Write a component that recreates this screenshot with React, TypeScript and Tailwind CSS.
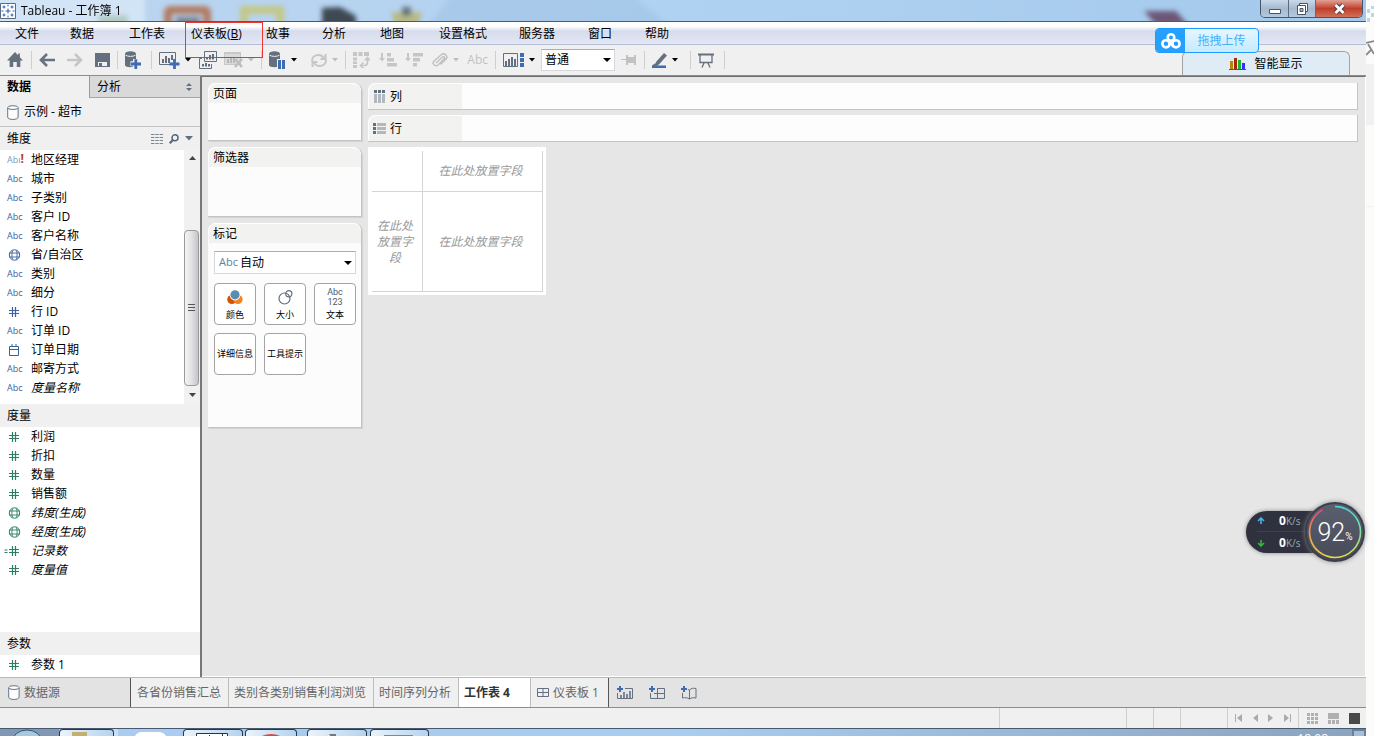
import React from "react";

const Caret = ({ className = "fill-black" }: { className?: string }) => (
  <svg width="6" height="4" viewBox="0 0 6 4" className={className}>
    <path d="M0 0h6L3 3.5z" />
  </svg>
);

/* ---------- menu ---------- */

const menus: { label: string; key?: string; width: string }[] = [
  { label: "文件", width: "w-[55px]" },
  { label: "数据", width: "w-[59px]" },
  { label: "工作表", width: "w-[62px]" },
  { label: "仪表板", key: "B", width: "w-[75px]" },
  { label: "故事", width: "w-[56px]" },
  { label: "分析", width: "w-[58px]" },
  { label: "地图", width: "w-[59px]" },
  { label: "设置格式", width: "w-[80px]" },
  { label: "服务器", width: "w-[69px]" },
  { label: "窗口", width: "w-[57px]" },
  { label: "帮助", width: "w-[57px]" },
];

/* ---------- toolbar icons ---------- */

const HomeIcon = () => (
  <svg width="16" height="16" viewBox="0 0 18 16" preserveAspectRatio="none" fill="#64707f">
    <path d="M9 0l3.5 3.3V1.5h2v3.7L18 8.5h-3V15h-4v-5H7v5H3V8.5H0z" />
  </svg>
);
const ArrowLeft = () => (
  <svg width="16" height="14" viewBox="0 0 16 14" fill="none" stroke="#66727f" strokeWidth="2.6">
    <path d="M16 7H2M8 1L2 7l6 6" />
  </svg>
);
const ArrowRight = () => (
  <svg width="16" height="14" viewBox="0 0 16 14" fill="none" stroke="#c6c6c6" strokeWidth="2.6">
    <path d="M0 7h14M8 1l6 6-6 6" />
  </svg>
);
const SaveIcon = () => (
  <svg width="15" height="14" viewBox="0 0 15 14">
    <path fill="#64707f" d="M0 0h15v14H0z" />
    <path fill="#efefef" d="M3 9h9v4H3z" />
    <path fill="#64707f" d="M4 10h3v3H4z" />
  </svg>
);
const Cylinder = () => (
  <g>
    <path fill="#64707f" d="M0 3v11c0 1.3 2.5 2.3 5.500 2.300S11 15.300 11 14V3z" />
    <ellipse cx="5.500" cy="2.800" rx="5.500" ry="2.600" fill="#64707f" />
    <path d="M.6 4.200c2 1.600 8 1.600 9.800 0" fill="none" stroke="#efefef" strokeWidth="1" />
  </g>
);
const AddDataIcon = () => (
  <svg width="16" height="18" viewBox="0 0 16 18">
    <Cylinder />
    <path d="M10.500 8v9.500M5.500 12.700h10" stroke="#efefef" strokeWidth="5" />
    <path d="M10.800 8.200V18M6 13h10" stroke="#3f6cb0" strokeWidth="2.800" />
  </svg>
);
const AddSheetIcon = () => (
  <svg width="21" height="18" viewBox="0 0 21 18">
    <path d="M11 13.500H.5v-12h16V8" fill="none" stroke="#64707f" />
    <path fill="#64707f" d="M3 8h2v4H3zM6 5h2v7H6zM9 7h2v5H9zM12 4h2v5h-2z" />
    <path d="M15.500 8v10M10.500 13h10" stroke="#3f6cb0" strokeWidth="2.800" />
  </svg>
);
const DuplicateIcon = () => (
  <svg width="18" height="18" viewBox="0 0 18 18" fill="none" stroke="#64707f">
    <path d="M5.500.5h12v10h-12z" />
    <path d="M3 7.500H.5v10h12V13" />
    <path strokeWidth="2" d="M8 8.500V6M11 8.500V4M14 8.500V3M4 15.500V13M7 15.500V12M10 15.500V13" />
  </svg>
);
const ClearSheetIcon = () => (
  <svg width="19" height="16" viewBox="0 0 19 16">
    <path fill="#c8c8c8" d="M0 0h17v13H0z" />
    <path fill="#efefef" d="M1 2h15v10H1z" opacity=".45" />
    <path fill="#b8b8b8" d="M3 7h2v4H3zM6 5h2v6H6zM9 6h2v5H9z" />
    <path d="M11 7l7 8M18 7l-7 8" stroke="#bdbdbd" strokeWidth="2.600" />
  </svg>
);
const PauseDataIcon = () => (
  <svg width="17" height="18" viewBox="0 0 17 18">
    <Cylinder />
    <path fill="#efefef" d="M8 8h9v10H8z" />
    <path fill="#3f6cb0" d="M9 9h3v9H9zM13 9h3v9h-3z" />
  </svg>
);
const RefreshIcon = () => (
  <svg width="16" height="15" viewBox="0 0 16 15" fill="none" stroke="#c6c6c6" strokeWidth="2">
    <path d="M1 8c0-4 3-6 6.500-6 2.500 0 4 1 5.500 3M15 7c0 4-3 6-6.500 6C6 13 4.500 12 3 10" />
    <path d="M14.500 1v5h-5M1.500 14V9h5" />
  </svg>
);
const SwapIcon = () => (
  <svg width="17" height="16" viewBox="0 0 17 16">
    <path fill="#c6c6c6" d="M0 0h4v4H0zM5.500 0h4v4h-4zM11 0h5v4h-5zM0 5.500h4v3H0zM0 9.500h4v2.500H0zM0 13h4v3H0z" />
    <path d="M14.500 6v4c0 2-1 3.500-3 3.500H8M10.500 10.500l-3 3 3 3M12 8.500l2.500-3 2.500 3" fill="none" stroke="#c6c6c6" strokeWidth="1.700" />
  </svg>
);
const SortAscIcon = () => (
  <svg width="18" height="14" viewBox="0 0 18 14" fill="#c6c6c6">
    <path d="M2 0h2v5h2L3 8.500 0 5h2zM8 0h4v3.500H8zM8 5h7v3.500H8zM8 10h10v3.500H8z" />
  </svg>
);
const SortDescIcon = () => (
  <svg width="18" height="14" viewBox="0 0 18 14" fill="#c6c6c6">
    <path d="M2 0h2v5h2L3 8.500 0 5h2zM8 0h10v3.500H8zM8 5h7v3.500H8zM8 10h4v3.500H8z" />
  </svg>
);
const ClipIcon = () => (
  <svg width="16" height="15" viewBox="0 0 16 15" fill="none" stroke="#c2c2c2" strokeWidth="1.500" strokeLinecap="round">
    <path d="M4.500 9.500l6-5.500c1.300-1 3 .6 1.800 1.900L6 12c-2.300 2-6.400-.7-4.200-3.800L9.500 1.500c2.500-2 6.500.8 5 4L9 11" />
  </svg>
);
const ShowMeIcon = () => (
  <svg width="21" height="15" viewBox="0 0 21 15">
    <path d="M.5.5h14v13H.5z" fill="none" stroke="#64707f" />
    <path fill="#64707f" d="M2 8h2v5H2zM5 6h2v7H5zM8 4h2v9H8zM11 6h2v7h-2z" />
    <path fill="#3f6cb0" d="M17 0h4v4h-4zM17 5h4v4h-4zM17 10h4v4h-4z" />
  </svg>
);
const PinIcon = () => (
  <svg width="16" height="10" viewBox="0 0 16 10" fill="#c2c2c2">
    <path d="M0 4h5V0h2v2h6V0h2v10h-2V8H7v2H5V5H0z" />
  </svg>
);
const PenIcon = () => (
  <svg width="15" height="15" viewBox="0 0 15 15">
    <path fill="#64707f" d="M12 0l3 2.500-8 9L2 14l2-5z" />
    <path fill="#3f6cb0" d="M0 12.500h14V15H0z" />
    <path fill="#64707f" d="M0 12.500l3-2 3 1.500-3 2.500z" />
  </svg>
);
const PresentIcon = () => (
  <svg width="16" height="15" viewBox="0 0 16 15" fill="none" stroke="#64707f" strokeWidth="1.300">
    <path d="M0 1.500h16" strokeWidth="2" />
    <path d="M2 2v7.500h12V2M6 10l-2 4.500M10 10l2 4.500" />
  </svg>
);

const Tool = ({
  label,
  children,
  caret,
}: {
  label: string;
  children: React.ReactNode;
  caret?: "on" | "off";
}) => (
  <button aria-label={label} className="flex shrink-0 items-center gap-[5px]">
    {children}
    {caret && <Caret className={caret === "on" ? "fill-black" : "fill-[#bdbdbd]"} />}
  </button>
);

const Group = ({ width, children }: { width: string; children: React.ReactNode }) => (
  <div className={`flex h-[18px] shrink-0 items-center justify-between border-r border-[#cfcfcf] px-[7px] ${width}`}>
    {children}
  </div>
);

/* ---------- field icons ---------- */

type Kind = "abc" | "abc!" | "globe" | "hash" | "date" | "calc";

const FieldIcon = ({ kind, tone }: { kind: Kind; tone: "blue" | "green" }) => {
  const color = tone === "blue" ? "#3b62a0" : "#2a7f60";
  if (kind === "abc")
    return <span className="font-['Open_Sans',sans-serif] text-[9px] font-medium text-[#3b62a0]">Abc</span>;
  if (kind === "abc!")
    return (
      <span className="font-['Open_Sans',sans-serif] text-[9px] text-[#7d97c4]">
        Abı
        <b className="text-[12px] text-[#b8432f]">!</b>
      </span>
    );
  if (kind === "globe")
    return (
      <svg width="15" height="12" viewBox="-1 0 15 12" fill="none" stroke={color}>
        <circle cx="6.500" cy="6" r="5.200" />
        <path d="M1.300 4h10.400M1.300 8h10.400M4.500 1.500c-.8 3-.8 6 0 9M8.500 1.500c.8 3 .8 6 0 9" strokeWidth=".9" />
      </svg>
    );
  if (kind === "date")
    return (
      <svg width="14" height="12" viewBox="-2 0 14 12" fill="none" stroke={color}>
        <path d="M.5 2.500h9v9h-9zM.5 5.500h9M3 0v3M7 0v3" />
      </svg>
    );
  return (
    <svg width="16" height="10" viewBox="-6 0 16 10" className="-ml-1" fill="none" stroke={color} strokeWidth="1.200">
      <path d="M3.500 0v10M6.500 0v10M0 3.500h10M0 6.500h10" />
      {kind === "calc" && <path d="M-4.500 4h3M-4.500 6.500h3" />}
    </svg>
  );
};

const Field = ({ kind, label, italic, tone }: { kind: Kind; label: string; italic?: boolean; tone: "blue" | "green" }) => (
  <li className="flex h-[19px] items-center pl-[7px]">
    <span className="flex w-6 shrink-0 items-center whitespace-nowrap">
      <FieldIcon kind={kind} tone={tone} />
    </span>
    <span className={italic ? "italic" : ""}>{label}</span>
  </li>
);

const dimensions: { kind: Kind; label: string; italic?: boolean }[] = [
  { kind: "abc!", label: "地区经理" },
  { kind: "abc", label: "城市" },
  { kind: "abc", label: "子类别" },
  { kind: "abc", label: "客户 ID" },
  { kind: "abc", label: "客户名称" },
  { kind: "globe", label: "省/自治区" },
  { kind: "abc", label: "类别" },
  { kind: "abc", label: "细分" },
  { kind: "hash", label: "行 ID" },
  { kind: "abc", label: "订单 ID" },
  { kind: "date", label: "订单日期" },
  { kind: "abc", label: "邮寄方式" },
  { kind: "abc", label: "度量名称", italic: true },
];

const measures: { kind: Kind; label: string; italic?: boolean }[] = [
  { kind: "hash", label: "利润" },
  { kind: "hash", label: "折扣" },
  { kind: "hash", label: "数量" },
  { kind: "hash", label: "销售额" },
  { kind: "globe", label: "纬度(生成)", italic: true },
  { kind: "globe", label: "经度(生成)", italic: true },
  { kind: "calc", label: "记录数", italic: true },
  { kind: "hash", label: "度量值", italic: true },
];

const DatabaseIcon = () => (
  <svg width="12" height="15" viewBox="0 0 12 15" fill="#fdfdfd" stroke="#64758a">
    <path d="M.7 2.800v9.400c0 3 10.400 3 10.400 0V2.800" />
    <ellipse cx="5.900" cy="2.600" rx="5.200" ry="1.900" />
  </svg>
);

const SectionHeader = ({ children }: { children: React.ReactNode }) => (
  <div className="flex h-[23px] shrink-0 items-center justify-between bg-[#f0f0f0] pr-[7px] pl-[7px]">{children}</div>
);

/* ---------- title bar ---------- */

const TitleBar = () => (
  <header className="relative flex h-[22px] shrink-0 items-center overflow-hidden border-b border-[#4d5b6b] bg-gradient-to-r from-[#bdd5ef] via-[#b0d2f2] to-[#a4c9eb]">
    <svg className="absolute inset-y-0 left-0 h-[21px] w-[1300px]" viewBox="0 0 1300 21" preserveAspectRatio="xMinYMin">
      <defs>
        <filter id="glass" filterUnits="userSpaceOnUse" x="-20" y="-20" width="1340" height="70">
          <feGaussianBlur stdDeviation="2.500" />
        </filter>
      </defs>
      <g filter="url(#glass)">
        <path fill="#dcebf9" d="M-10-10h155v40H-10z" opacity=".7" />
        <path fill="#8fb3d8" d="M455-10h170l50 40H425z" opacity=".3" />
        <path d="M168 30V13q0-3 3-3h33q3 0 3 3v17" fill="none" stroke="#b07a62" strokeWidth="8" />
        <path fill="#74838f" d="M176 17h24v10h-24z" />
        <path d="M244 30V10h36v20" fill="none" stroke="#c3c886" strokeWidth="8" />
        <path fill="#3d4a52" d="M322 8l18-1 16 9v12h-34z" />
        <path fill="#b7ba85" d="M392 12h30l-4 14h-24z" />
        <path fill="#66717a" d="M402 7h9v9h-9z" />
        <path fill="#93b18e" d="M98 15h30v10H98z" opacity=".5" />
        <path fill="#6c5674" d="M1144 11h32l12 14h-32z" />
      </g>
    </svg>
    <h1 className="relative flex items-center gap-[5px] text-[12px] text-black">
      <svg width="16" height="16" viewBox="0 0 16 16" stroke="#2d5fa8">
        <path fill="#fff" stroke="#5b6b80" d="M.5.5h15v15H.5z" />
        <path d="M8 5.500v5M5.500 8h5M4 2.500v3M2.500 4h3M12 2.500v3M10.500 4h3M4 10.500v3M2.500 12h3M12 10.500v3M10.500 12h3M8 1.500v2M8 12.500v2M1.500 8h2M12.500 8h2" />
      </svg>
      Tableau - 工作簿 1
    </h1>
    <div className="absolute top-0 right-[3px] flex h-[18px] overflow-hidden rounded-b-[5px] border border-t-0 border-[#44566b]">
      <button aria-label="最小化" className="flex w-7 items-center justify-center border-r border-[#5c6c80] bg-gradient-to-b from-[#c9d9ea] via-[#a6b9ce] to-[#b4cadf]">
        <svg width="12" height="16" viewBox="0 0 12 16">
          <path fill="#fff" stroke="#4a5564" d="M.5 8.500h11v4H.5z" />
        </svg>
      </button>
      <button aria-label="还原" className="flex w-[27px] items-center justify-center border-r border-[#5c6c80] bg-gradient-to-b from-[#c9d9ea] via-[#a6b9ce] to-[#b4cadf]">
        <svg width="13" height="14" viewBox="0 0 13 14" fill="#fff" stroke="#4a5564">
          <path d="M3.500 1.500h8v8h-8z" />
          <path d="M1.500 3.500h8v9h-8z" />
          <path fill="#a6b9ce" d="M4 6.500h3v3H4z" />
        </svg>
      </button>
      <button aria-label="关闭" className="flex w-[46px] items-center justify-center bg-gradient-to-b from-[#e0a094] via-[#bf3d29] to-[#d0705a]">
        <svg width="13" height="12" viewBox="0 0 13 12" fill="none">
          <path d="M2.500 2l8 8M10.500 2l-8 8" stroke="#564049" strokeWidth="5" />
          <path d="M2.500 2l8 8M10.500 2l-8 8" stroke="#fff" strokeWidth="2.800" />
        </svg>
      </button>
    </div>
  </header>
);

const MenuBar = () => (
  <nav className="flex h-[23px] shrink-0 items-stretch border-b border-[#b4bdd3] bg-gradient-to-b from-white from-[20%] via-[#d6dcec] via-[42%] to-[#e3e8f5] pt-[2px] pl-[15px]">
    {menus.map((m) => (
      <button key={m.label} className={`shrink-0 text-left whitespace-nowrap ${m.width}`}>
        {m.label}
        {m.key && (
          <>
            (<u>{m.key}</u>)
          </>
        )}
      </button>
    ))}
  </nav>
);

const Toolbar = () => (
  <div className="flex h-[31px] shrink-0 items-center border-b border-[#8d8d8d] bg-[#f0f0f0]">
    <Group width="w-8">
      <Tool label="起始页"><HomeIcon /></Tool>
    </Group>
    <Group width="w-[86px]">
      <Tool label="撤消"><ArrowLeft /></Tool>
      <Tool label="重做"><ArrowRight /></Tool>
      <Tool label="保存"><SaveIcon /></Tool>
    </Group>
    <Group width="w-[34px]">
      <Tool label="新建数据源"><AddDataIcon /></Tool>
    </Group>
    <Group width="w-[110px]">
      <Tool label="新建工作表" caret="on"><AddSheetIcon /></Tool>
      <Tool label="复制工作表"><DuplicateIcon /></Tool>
      <Tool label="清除工作表" caret="off"><ClearSheetIcon /></Tool>
    </Group>
    <Group width="w-[84px]">
      <Tool label="暂停更新" caret="on"><PauseDataIcon /></Tool>
      <Tool label="运行更新" caret="off"><RefreshIcon /></Tool>
    </Group>
    <Group width="w-[150px]">
      <Tool label="交换行和列"><SwapIcon /></Tool>
      <Tool label="升序排序"><SortAscIcon /></Tool>
      <Tool label="降序排序"><SortDescIcon /></Tool>
      <Tool label="组成员" caret="off"><ClipIcon /></Tool>
      <Tool label="显示标记标签">
        <span className="font-['Open_Sans',sans-serif] text-[12px] font-medium text-[#c2c2c2]">Abc</span>
      </Tool>
    </Group>
    <Group width="w-[149px]">
      <Tool label="显示卡" caret="on"><ShowMeIcon /></Tool>
      <div className="relative">
        <select aria-label="适合" className="h-[22px] w-[74px] appearance-none border border-[#d5d8de] border-t-[#a9adb5] bg-white pl-[3px] text-black">
          <option>普通</option>
        </select>
        <svg width="8" height="4" viewBox="0 0 8 4" className="pointer-events-none absolute top-[9px] right-1">
          <path d="M0 0h8L4 4z" />
        </svg>
      </div>
      <Tool label="固定轴"><PinIcon /></Tool>
    </Group>
    <Group width="w-[46px]">
      <Tool label="突出显示" caret="on"><PenIcon /></Tool>
    </Group>
    <Group width="w-[34px]">
      <Tool label="演示模式"><PresentIcon /></Tool>
    </Group>
    <button className="mr-4 ml-auto flex h-6 w-[168px] items-center justify-center gap-2 self-end rounded-t-md border border-b-0 border-[#a0a4a8] bg-[#dfebf5] text-black">
      <svg width="17" height="13" viewBox="0 0 17 13">
        <path fill="#b8860b" d="M1 4h3v8H1z" />
        <path fill="#a02c10" d="M5 1h3v11H5z" />
        <path fill="#1fb32e" d="M9 3h3v9H9z" />
        <path fill="#2a32ff" d="M13 6h3v6h-3z" />
        <path fill="#555" d="M0 12h17v1H0z" />
      </svg>
      智能显示
    </button>
  </div>
);

/* ---------- data pane ---------- */

const DataPane = () => (
  <aside className="flex w-[202px] shrink-0 flex-col border-r-2 border-[#777] bg-white">
    <div className="flex h-[22px] shrink-0" role="tablist">
      <button role="tab" aria-selected="true" className="w-[90px] border-r border-[#9a9a9a] bg-[#f0f0f0] pl-[7px] text-left font-bold">
        数据
      </button>
      <button role="tab" aria-selected="false" className="flex flex-1 items-center justify-between border-b border-[#a6a6a6] bg-[#d9d9d9] pr-2 pl-[7px]">
        分析
        <svg width="6" height="8" viewBox="0 0 6 8" fill="#64707f">
          <path d="M3 0l3 3H0zM3 8L0 5h6z" />
        </svg>
      </button>
    </div>
    <button className="flex h-[29px] shrink-0 items-center gap-[5px] border-b border-[#c4c4c4] bg-[#f0f0f0] pl-[7px]">
      <DatabaseIcon />
      示例 - 超市
    </button>
    <SectionHeader>
      <h2>维度</h2>
      <span className="flex items-center gap-[6px]">
        <button aria-label="查看数据">
          <svg width="12" height="10" viewBox="0 0 12 10" stroke="#7b8591" strokeDasharray="3.400 .9">
            <path d="M0 .5h12M0 3.500h12M0 6.500h12M0 9.500h12" />
          </svg>
        </button>
        <button aria-label="查找字段">
          <svg width="10" height="10" viewBox="0 0 10 10" fill="none" stroke="#56657a">
            <circle cx="6" cy="3.800" r="3" strokeWidth="1.500" />
            <path d="M4 6L.7 9.300" strokeWidth="2" />
          </svg>
        </button>
        <button aria-label="菜单">
          <svg width="8" height="5" viewBox="0 0 8 5" fill="#64707f">
            <path d="M0 0h8L4 4.500z" />
          </svg>
        </button>
      </span>
    </SectionHeader>
    <div className="flex h-[254px] shrink-0">
      <ul className="flex-1">
        {dimensions.map((f) => (
          <Field key={f.label} tone="blue" {...f} />
        ))}
      </ul>
      <div className="flex w-4 flex-col items-center bg-[#f1f1f1]">
        <button aria-label="向上滚动" className="flex h-4 shrink-0 items-center">
          <svg width="7" height="4" viewBox="0 0 7 4" fill="#444">
            <path d="M3.500 0L7 4H0z" />
          </svg>
        </button>
        <div className="h-16 shrink-0" />
        <div className="mr-px flex w-[15px] flex-1 items-center justify-center rounded-sm border border-[#9a9a9a] bg-gradient-to-r from-[#f4f4f4] via-[#e2e2e4] to-[#c4c5ca]">
          <svg width="8" height="8" viewBox="0 0 8 8" stroke="#555">
            <path d="M0 .5h7M0 3.500h7M0 6.500h7" />
          </svg>
        </div>
        <button aria-label="向下滚动" className="flex h-[18px] shrink-0 items-center">
          <svg width="7" height="4" viewBox="0 0 7 4" fill="#444">
            <path d="M0 0h7L3.500 4z" />
          </svg>
        </button>
      </div>
    </div>
    <SectionHeader>
      <h2>度量</h2>
    </SectionHeader>
    <ul className="min-h-0 flex-1 overflow-hidden">
      {measures.map((f) => (
        <Field key={f.label} tone="green" {...f} />
      ))}
    </ul>
    <SectionHeader>
      <h2>参数</h2>
    </SectionHeader>
    <ul className="h-[22px] shrink-0">
      <Field kind="hash" label="参数 1" tone="green" />
    </ul>
  </aside>
);

/* ---------- cards ---------- */

const Card = ({ title, height, children }: { title: string; height: string; children?: React.ReactNode }) => (
  <section className={`w-[154px] rounded-t-lg border-r border-b border-[#c4c4c4] bg-[#fcfcfc] shadow-[1px_1px_1px_#d2d2d2] ${height}`}>
    <h2 className="flex h-5 items-center rounded-t-lg border-t border-l border-white bg-[#f2f2f0] pl-1">{title}</h2>
    {children}
  </section>
);

const MarkButton = ({ label, icon }: { label: string; icon?: React.ReactNode }) => (
  <button className="flex h-[42px] w-[42px] flex-col items-center justify-center rounded-[4px] border border-[#a3a3a3] bg-white text-[9px] leading-[14px] whitespace-nowrap">
    {icon && <span className="flex h-[22px] items-center">{icon}</span>}
    {label}
  </button>
);

const MarksCard = () => (
  <Card title="标记" height="h-[205px]">
    <div className="relative mt-2 mr-[5px] ml-[6px]">
      <span className="pointer-events-none absolute top-[3px] left-[5px] font-['Open_Sans',sans-serif] text-[11px] font-medium text-[#5583a5]">Abc</span>
      <select aria-label="标记类型" className="h-[23px] w-full appearance-none border border-[#d3d8de] border-t-[#a9adb5] bg-white pl-[25px] text-black">
        <option>自动</option>
      </select>
      <svg width="8" height="4" viewBox="0 0 8 4" className="pointer-events-none absolute top-[10px] right-1">
        <path d="M0 0h8L4 4z" />
      </svg>
    </div>
    <div className="mt-[9px] mr-[5px] ml-[6px] grid grid-cols-[repeat(3,42px)] gap-2">
      <MarkButton
        label="颜色"
        icon={
          <svg width="16" height="15" viewBox="0 0 16 15">
            <circle cx="4.800" cy="9.500" r="4.600" fill="#d35400" />
            <circle cx="11" cy="9.500" r="4.600" fill="#f58220" />
            <circle cx="8" cy="5" r="5.400" fill="#fff" />
            <circle cx="8" cy="4.800" r="4.600" fill="#5b8db1" />
          </svg>
        }
      />
      <MarkButton
        label="大小"
        icon={
          <svg width="15" height="15" viewBox="0 0 15 15" fill="none" stroke="#64707f" strokeWidth="1.200">
            <circle cx="6.500" cy="8.500" r="5.500" />
            <circle cx="10.800" cy="3.800" r="3.100" />
          </svg>
        }
      />
      <MarkButton
        label="文本"
        icon={
          <span className="flex flex-col font-['Roboto',sans-serif] text-[9px] leading-[10px] text-[#4e5c6e]">
            <span>Abc</span>
            <span>123</span>
          </span>
        }
      />
      <MarkButton label="详细信息" />
      <MarkButton label="工具提示" />
    </div>
  </Card>
);

const Shelf = ({ label, icon }: { label: string; icon: React.ReactNode }) => (
  <div className="flex h-[27px] rounded-tl-lg border-r border-b border-[#c4c4c4] bg-[#fdfdfd]">
    <h2 className="flex w-[94px] items-center gap-1 rounded-tl-lg border-t border-l border-white bg-[#f2f2f0] pl-1">
      {icon}
      {label}
    </h2>
  </div>
);

const dropCell = "flex items-center justify-center border-r border-b border-[#d4d4d4] pr-1";

const Workspace = () => (
  <main className="flex min-w-0 flex-1 gap-[6px] border-t border-r border-b border-t-[#6e6e6e] border-r-white border-b-white bg-[#e6e6e6] pt-[6px] pr-[7px] pl-[6px]">
    <div className="flex shrink-0 flex-col gap-[6px]">
      <Card title="页面" height="h-[58px]" />
      <Card title="筛选器" height="h-[70px]" />
      <MarksCard />
    </div>
    <div className="flex min-w-0 flex-1 flex-col gap-[5px]">
      <Shelf
        label="列"
        icon={
          <svg width="13" height="13" viewBox="0 0 13 13">
            <path fill="#64707f" d="M1 0h3v3H1zM5 0h3v3H5zM9 0h3v3H9z" />
            <path fill="#b2b8c0" d="M1 4h3v9H1zM5 4h3v9H5zM9 4h3v9H9z" />
          </svg>
        }
      />
      <Shelf
        label="行"
        icon={
          <svg width="13" height="12" viewBox="0 0 13 12">
            <path fill="#64707f" d="M0 0h3v3H0zM0 4h3v3H0zM0 8h3v3H0z" />
            <path fill="#b2b8c0" d="M4 0h9v3H4zM4 4h9v3H4zM4 8h9v3H4z" />
          </svg>
        }
      />
      <div className="w-[178px] bg-white px-1 pt-1 pb-[3px] text-[#999] italic">
        <div className="grid grid-cols-[51px_120px] grid-rows-[41px_100px] text-center leading-4">
          <div className={dropCell} />
          <div className={dropCell}>在此处放置字段</div>
          <div className={dropCell}>
            <span className="w-9">在此处放置字段</span>
          </div>
          <div className={dropCell}>在此处放置字段</div>
        </div>
      </div>
    </div>
  </main>
);

/* ---------- bottom bars ---------- */

const DashboardIcon = () => (
  <svg width="12" height="9" viewBox="0 0 12 9" fill="none" stroke="#64707f">
    <path d="M.5.5h11v8H.5zM6 .5v8M.5 4.500h11" />
  </svg>
);

const Plus = () => <path d="M3 0v6M0 3h6" stroke="#3f6cb0" strokeWidth="2" />;

const SheetTabs = () => (
  <div className="flex h-[31px] shrink-0 border-t border-b border-[#b8b8b8] border-b-[#8c8c8c] bg-[#e3e3e3] text-[#666]">
    <button className="flex w-[131px] items-center gap-1 border-r border-[#555] pl-2">
      <DatabaseIcon />
      数据源
    </button>
    <button className="w-[98px] border-r border-[#bdbdbd] bg-[#f0f0f0] pl-[6px] text-left whitespace-nowrap">各省份销售汇总</button>
    <button className="w-[145px] border-r border-[#bdbdbd] bg-[#f0f0f0] pl-[5px] text-left whitespace-nowrap">类别各类别销售利润浏览</button>
    <button className="w-[85px] border-r border-[#bdbdbd] bg-[#f0f0f0] pl-[5px] text-left whitespace-nowrap">时间序列分析</button>
    <button className="w-[72px] border-r border-[#bdbdbd] bg-white pl-[5px] text-left font-bold text-[#333]">工作表 4</button>
    <button className="flex w-[78px] items-center gap-1 border-r border-[#555] bg-[#f0f0f0] pl-[6px]">
      <DashboardIcon />
      仪表板 1
    </button>
    <div className="flex items-center gap-4 pl-2">
      <button aria-label="新建工作表">
        <svg width="16" height="14" viewBox="0 0 16 14" fill="none" stroke="#64707f">
          <path d="M8 2.500h7.500v10H.500V7" />
          <path d="M4 12V9M7 12V6M10 12V8M13 12V5" strokeWidth="1.600" />
          <Plus />
        </svg>
      </button>
      <button aria-label="新建仪表板">
        <svg width="16" height="14" viewBox="0 0 16 14" fill="none" stroke="#64707f">
          <path d="M8 2.500h7.500v10H1.500V7M8.500 3v9.500M5 7.500h10.500" />
          <Plus />
        </svg>
      </button>
      <button aria-label="新建故事">
        <svg width="16" height="14" viewBox="0 0 16 14" fill="none" stroke="#64707f">
          <path d="M8.500 4c2-2 4-2 6.500-1.500v9.500c-2.500-.5-4.500-.5-6.500 1-2-1.500-4.500-1.500-7-1V7M8.500 4v9M7 3.500L8.500 4" />
          <Plus />
        </svg>
      </button>
    </div>
  </div>
);

const StatusBar = () => (
  <footer className="flex h-5 shrink-0 items-stretch justify-end bg-[#f0f0f0]">
    <div className="w-[127px] border-l border-[#cfcfcf]" />
    <div className="w-[27px] border-l border-[#cfcfcf]" />
    <div className="w-[27px] border-l border-[#cfcfcf]" />
    <div className="w-[47px] border-l border-[#cfcfcf]" />
    <div className="flex w-[71px] items-center justify-between border-l border-[#cfcfcf] px-[7px]">
      <button aria-label="第一个">
        <svg width="7" height="8" viewBox="0 0 7 8" fill="#aaa"><path d="M0 0h1v8H0zM7 0v8L2 4z" /></svg>
      </button>
      <button aria-label="上一个">
        <svg width="5" height="8" viewBox="0 0 5 8" fill="#aaa"><path d="M5 0v8L0 4z" /></svg>
      </button>
      <button aria-label="下一个">
        <svg width="5" height="8" viewBox="0 0 5 8" fill="#aaa"><path d="M0 0v8l5-4z" /></svg>
      </button>
      <button aria-label="最后一个">
        <svg width="7" height="8" viewBox="0 0 7 8" fill="#aaa"><path d="M0 0v8l5-4zM6 0h1v8H6z" /></svg>
      </button>
    </div>
    <div className="flex w-[68px] items-center justify-between border-l border-[#cfcfcf] pr-[6px] pl-2">
      <button aria-label="工作表排序程序">
        <svg width="11" height="11" viewBox="0 0 11 11" fill="#b0b0b0">
          <path d="M0 0h3v3H0zM4 0h3v3H4zM8 0h3v3H8zM0 4h3v3H0zM4 4h3v3H4zM8 4h3v3H8zM0 8h3v3H0zM4 8h3v3H4zM8 8h3v3H8z" />
        </svg>
      </button>
      <button aria-label="缩略图">
        <svg width="11" height="11" viewBox="0 0 11 11" fill="#b0b0b0">
          <path d="M0 0h11v6H0zM0 7h3v4H0zM4 7h3v4H4zM8 7h3v4H8z" />
        </svg>
      </button>
      <button aria-label="标签">
        <svg width="11" height="11" viewBox="0 0 11 11" fill="#4a4a4a"><path d="M0 0h11v11H0z" /></svg>
      </button>
    </div>
  </footer>
);

const taskButton = "h-full rounded-t-sm border border-b-0 border-[#26384d] bg-gradient-to-r from-[#eaf3fb] to-[#b5d3ee]";

const Taskbar = () => (
  <div className="flex h-2 shrink-0 overflow-hidden border-t border-[#46596e] bg-gradient-to-r from-[#a6c9ec] via-[#a9cdf0] to-[#8aa3be]">
    <button aria-label="开始" className="w-[59px] bg-[#8098b5]">
      <svg width="59" height="7" viewBox="0 0 59 7">
        <ellipse cx="27" cy="13" rx="15" ry="12" fill="#a9c8dc" stroke="#2b5877" />
      </svg>
    </button>
    <button aria-label="文件夹" className={`w-[55px] ${taskButton}`}>
      <svg width="50" height="7" viewBox="0 0 50 7"><path fill="#c5ae72" d="M12 2h15v5H12z" /></svg>
    </button>
    <button aria-label="云盘" className="w-[69px] border-l-4 border-[#c9def2] bg-[#a9ccf0]">
      <svg width="65" height="7" viewBox="0 0 65 7"><path fill="#fff" d="M17 7q2-4 7-4h16q6 0 8 4z" /></svg>
    </button>
    <button aria-label="Tableau" className={`w-[60px] ${taskButton}`}>
      <svg width="58" height="7" viewBox="0 0 58 7" fill="#fff" stroke="#333"><path d="M12.500 8V3.500h31V8M25.500 5v3M38.500 4v4" /></svg>
    </button>
    <button aria-label="浏览器" className={`mx-[2px] w-[52px] ${taskButton}`}>
      <svg width="50" height="7" viewBox="0 0 50 7"><ellipse cx="25" cy="10" rx="12" ry="6" fill="#d94b3e" /></svg>
    </button>
    <button aria-label="窗口" className={`mr-[3px] ml-2 w-[60px] ${taskButton}`}>
      <svg width="56" height="7" viewBox="0 0 56 7"><path fill="#777" d="M21 4h7v3h-5z" /></svg>
    </button>
    <button aria-label="文档" className={`w-[59px] ${taskButton}`}>
      <svg width="56" height="7" viewBox="0 0 56 7"><path fill="#7d8894" d="M13 5h29v2H13z" /></svg>
    </button>
    <div className="ml-auto flex h-full items-start">
      <time className="mr-6 pt-[2px] text-[12px] text-white">18:08</time>
      <button aria-label="显示桌面" className="h-full w-[14px] border-2 border-b-0 border-[#67819c] bg-[#a9bed3]" />
    </div>
  </div>
);

/* ---------- floating widgets ---------- */

const UploadWidget = () => (
  <button className="absolute top-7 right-[115px] flex h-[25px] w-[104px] items-stretch overflow-hidden rounded-[4px] border border-[#1f9bff] bg-gradient-to-b from-[#e6f6ff] to-[#c4ebff] text-[#44b0fb]">
    <span className="flex w-[29px] items-center justify-center bg-[#26a0ff]">
      <svg width="20" height="16" viewBox="0 0 20 16" fill="none" stroke="#fff" strokeWidth="2.600">
        <circle cx="10" cy="4.600" r="3.300" />
        <circle cx="5" cy="10.800" r="3.600" />
        <circle cx="15" cy="10.800" r="3.600" />
        <path d="M7.500 8.500l5 5" />
      </svg>
    </span>
    <span className="flex flex-1 items-center justify-center">拖拽上传</span>
  </button>
);

const SpeedWidget = () => (
  <div className="absolute right-[9px] bottom-[174px] flex h-[60px] w-[119px] items-center">
    <div className="h-[42px] w-[90px] rounded-l-full bg-[#2f323e] pl-[11px] font-['Open_Sans',sans-serif] text-[10px] text-[#a4a6ad] shadow-[0_0_4px_#888]">
      <div className="flex h-[21px] items-center gap-[14px] border-b border-[#3d404c]">
        <svg width="8" height="8" viewBox="0 0 8 8" fill="none" stroke="#45b4f5" strokeWidth="1.600"><path d="M4 7V1M1 4l3-3 3 3" /></svg>
        <span><b className="text-[12px] text-white">0</b>K/s</span>
      </div>
      <div className="flex h-[21px] items-center gap-[14px]">
        <svg width="8" height="8" viewBox="0 0 8 8" fill="none" stroke="#32b83e" strokeWidth="1.600"><path d="M4 1v6M1 4l3 3 3-3" /></svg>
        <span><b className="text-[12px] text-white">0</b>K/s</span>
      </div>
    </div>
    <div className="absolute top-0 right-0 flex h-[60px] w-[60px] items-center justify-center rounded-full border-2 border-[#3c404c] bg-gradient-to-b from-[#5b6070] to-[#474b58] font-['Roboto',sans-serif] text-white shadow-[0_0_5px_#888]">
      <svg width="56" height="56" viewBox="-28 -28 56 56" fill="none" strokeWidth="1.600" className="absolute">
        <defs>
          <linearGradient id="ringRight" x1="0" y1="0" x2="0" y2="1">
            <stop stopColor="#45d8d4" />
            <stop offset=".5" stopColor="#7fe0a0" />
            <stop offset="1" stopColor="#e6dc4e" />
          </linearGradient>
          <linearGradient id="ringLeft" x1="0" y1="0" x2="0" y2="1">
            <stop stopColor="#f0407c" />
            <stop offset=".5" stopColor="#f29a50" />
            <stop offset="1" stopColor="#eadb44" />
          </linearGradient>
        </defs>
        <path d="M0-25.500A25.500 25.500 0 0 1 0 25.500" stroke="url(#ringRight)" />
        <path d="M0 25.500A25.500 25.500 0 0 1-12.500-22.200" stroke="url(#ringLeft)" />
      </svg>
      <span className="relative text-[25px] leading-none font-light">92</span>
      <span className="relative self-center pt-[10px] text-[10px] leading-none">%</span>
    </div>
  </div>
);

export default function App() {
  return (
    <div className="relative flex h-screen overflow-hidden bg-[#fbfbfa] font-['Open_Sans','Noto_Sans_CJK_SC',sans-serif] text-[12px] leading-4 text-black">
      <div className="flex min-w-0 flex-1 flex-col">
        <TitleBar />
        <MenuBar />
        <Toolbar />
        <div className="flex min-h-0 flex-1">
          <DataPane />
          <Workspace />
        </div>
        <SheetTabs />
        <StatusBar />
        <Taskbar />
      </div>
      <div className="w-2 shrink-0">
        <svg width="8" height="210" viewBox="0 0 8 210">
          <path fill="#b9d6ec" d="M1 9h3v4H1zM5 13h3v4H5zM1 18h3v4H1zM5 6h3v3H5z" />
          <path fill="#f1f1f1" d="M0 64h8v61H0zM0 206h8v1H0z" />
          <path d="M0 43l8-2M2 44l6 10M0 55l6-6" stroke="#8a8a8a" strokeWidth="1.800" fill="none" />
        </svg>
      </div>
      <div className="pointer-events-none absolute top-[22px] left-[185px] h-9 w-[78px] border border-[#f03434]" />
      <UploadWidget />
      <SpeedWidget />
    </div>
  );
}
